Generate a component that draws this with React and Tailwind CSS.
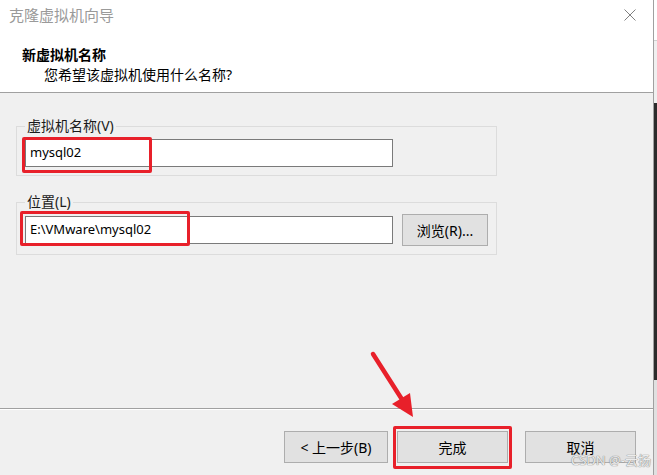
import React from "react";

// Windows-style clone wizard dialog, with the red annotation marks on top.
const FONT = "font-['Noto_Sans','Noto_Sans_CJK_SC',sans-serif]";

const GroupBox = ({ label, children, className = "" }) => (
  <fieldset className={`border border-[#dcdcdc] w-[481px] pl-[8px] pr-[8px] pb-[8px] ${className}`}>
    <legend className="px-[2px] text-[14px] leading-[18px] text-[#1a1a1a]">{label}</legend>
    {children}
  </fieldset>
);

const TextBox = ({ value }) => (
  <div className="w-[368px] h-[28px] bg-white border border-[#7a7a7a] flex items-center pl-[4px] text-[13px] text-black">
    {value}
  </div>
);

const WinButton = ({ children, w }) => (
  <button className={`${w} h-[32px] bg-[#e1e1e1] border border-[#adadad] text-[14px] text-black flex items-center justify-center`}>
    {children}
  </button>
);

export default function App() {
  return (
    <div className={`relative w-[657px] h-[475px] overflow-hidden flex bg-[#f0f0f0] ${FONT}`}>
      <div className="w-[653px] h-full flex flex-col">
        {/* title bar */}
        <div className="h-[30px] bg-white flex items-center justify-between pl-[9px] pr-[16px]">
          <span className="text-[15px] text-[#9a9a9a]">克隆虚拟机向导</span>
          <svg width="12" height="12" viewBox="0 0 12 12" className="mr-[1px]">
            <path d="M0.5 0.5 L11.5 11.5 M11.5 0.5 L0.5 11.5" stroke="#808080" strokeWidth="1" />
          </svg>
        </div>

        {/* header */}
        <div className="h-[63px] bg-white border-b border-[#a0a0a0] pt-[16px] pl-[22px]">
          <div className="text-[14px] leading-[18px] font-bold text-black">新虚拟机名称</div>
          <div className="mt-[2px] pl-[22px] text-[14px] leading-[18px] text-black">您希望该虚拟机使用什么名称?</div>
        </div>

        {/* body */}
        <div className="flex-1 pt-[24px] pl-[16px] border-b border-[#a0a0a0]">
          <GroupBox label="虚拟机名称(V)">
            <div className="mt-[4px]">
              <TextBox value="mysql02" />
            </div>
          </GroupBox>
          <GroupBox label="位置(L)" className="mt-[17px]">
            <div className="mt-[3px] flex items-center gap-[9px]">
              <TextBox value="E:\VMware\mysql02" />
              <WinButton w="w-[86px] h-[26px]">浏览(R)...</WinButton>
            </div>
          </GroupBox>
        </div>

        {/* footer */}
        <div className="h-[66px] border-t border-white flex items-start pt-[21px] pl-[284px]">
          <WinButton w="w-[104px]">&lt; 上一步(B)</WinButton>
          <div className="ml-[9px]">
            <WinButton w="w-[111px]">完成</WinButton>
          </div>
          <div className="ml-[17px]">
            <WinButton w="w-[111px]">取消</WinButton>
          </div>
        </div>
      </div>

      {/* right edge of the screen behind */}
      <div className="w-[4px] h-full border-l border-[#a0a0a0] flex flex-col">
        <div className="h-[40px] bg-white" />
        <div className="h-[63px] bg-[#f0f0f0] border-t border-[#d0d0d0]" />
        <div className="h-[277px] bg-[#2b2b2b]" />
        <div className="flex-1 bg-[#e0e0e0]" />
      </div>

      {/* red annotations */}
      <div className="absolute left-[22px] top-[137px] w-[130px] h-[36px] border-[3px] border-[#e8202a] rounded-[2px]" />
      <div className="absolute left-[20px] top-[211px] w-[170px] h-[35px] border-[3px] border-[#e8202a] rounded-[2px]" />
      <div className="absolute left-[393px] top-[426px] w-[119px] h-[43px] border-[3px] border-[#e8202a] rounded-[2px]" />
      <svg className="absolute left-0 top-0" width="657" height="475" viewBox="0 0 657 475">
        <line x1="373" y1="354" x2="403" y2="401" stroke="#e8202a" strokeWidth="4.5" strokeLinecap="round" />
        <polygon points="413,417 392,404 410,393" fill="#e8202a" />
      </svg>

      {/* watermark */}
      <div className="absolute left-[571px] top-[451px] whitespace-nowrap text-[13px] leading-[18px] text-[#ececec] [text-shadow:0_0_1px_#808080,0_0_1px_#808080]">
        CSDN @-云扬
      </div>
    </div>
  );
}
